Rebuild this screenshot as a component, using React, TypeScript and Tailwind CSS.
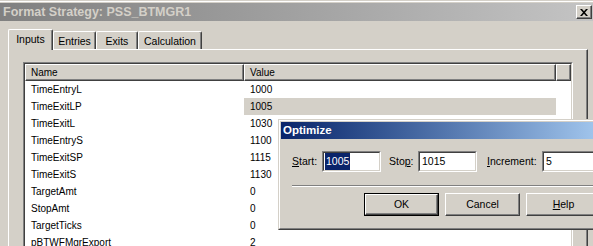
import React from "react";

const ROWS: [string, string][] = [
  ["TimeEntryL", "1000"],
  ["TimeExitLP", "1005"],
  ["TimeExitL", "1030"],
  ["TimeEntryS", "1100"],
  ["TimeExitSP", "1115"],
  ["TimeExitS", "1130"],
  ["TargetAmt", "0"],
  ["StopAmt", "0"],
  ["TargetTicks", "0"],
  ["pBTWFMgrExport", "2"],
];

const TABS = [
  { label: "Inputs", w: "w-[45px]", active: true },
  { label: "Entries", w: "w-[43px]", active: false },
  { label: "Exits", w: "w-[42px]", active: false },
  { label: "Calculation", w: "w-[64px]", active: false },
];

function Sunken({ className, children }: { className?: string; children?: React.ReactNode }) {
  return (
    <div className={`border border-t-[#808080] border-l-[#808080] border-r-white border-b-white ${className ?? ""}`}>
      <div className="h-full w-full border border-t-[#404040] border-l-[#404040] border-r-[#d4d0c8] border-b-[#d4d0c8] bg-white">
        {children}
      </div>
    </div>
  );
}

function Button({ children, def }: { children: React.ReactNode; def?: boolean }) {
  return (
    <div className={`h-[23px] w-[75px] bg-[#d4d0c8] ${def ? "border border-black" : ""}`}>
      <div className="flex h-full w-full items-center justify-center border border-t-white border-l-white border-r-[#404040] border-b-[#404040] shadow-[inset_-1px_-1px_0_#808080]">
        {children}
      </div>
    </div>
  );
}

export default function App() {
  return (
    <div className="relative h-[246px] w-[593px] overflow-hidden bg-[#d4d0c8] font-['Liberation_Sans',Arial,sans-serif] text-[10.5px] leading-none text-black">
      {/* window caption */}
      <div className="h-[1px]" />
      <div className="h-[1px] bg-white" />
      <div className="h-[1px]" />
      <div className="flex h-[18px] items-center justify-between bg-gradient-to-r from-[#808080] to-[#c4c4c4] pl-[3px] pr-[1px]">
        <span className="text-[12.5px] font-bold text-[#d4d0c8]">Format Strategy: PSS_BTMGR1</span>
        <div className="flex h-[14px] w-[16px] items-center justify-center border border-t-white border-l-white border-r-[#404040] border-b-[#404040] bg-[#d4d0c8] shadow-[inset_-1px_-1px_0_#808080]">
          <svg width="8" height="7" viewBox="0 0 8 7">
            <path d="M0 0h2l2 2.2L6 0h2L5 3.5 8 7H6L4 4.8 2 7H0l3-3.5z" fill="#000" />
          </svg>
        </div>
      </div>

      {/* tabs */}
      <div className="flex h-[28px] items-end pl-[8px]">
        {TABS.map((t) => (
          <div
            key={t.label}
            className={`${t.w} relative flex justify-center rounded-t-[2px] border-t border-l border-r border-t-white border-l-white border-r-[#404040] bg-[#d4d0c8] shadow-[inset_-1px_0_0_#808080] ${
              t.active ? "z-10 -mb-[1px] h-[21px] pt-[4px]" : "h-[18px] pt-[4px]"
            }`}
          >
            {t.label}
          </div>
        ))}
      </div>

      {/* tab page */}
      <div className="ml-[8px] h-[300px] w-[580px] border-t border-l border-r border-t-white border-l-white border-r-[#404040] pl-[14px] pt-[12px] shadow-[inset_-1px_0_0_#808080]">
        <Sunken className="h-[260px] w-[550px]">
          <div className="flex h-[17px] text-[10px]">
            <div className="flex w-[219px] items-center border border-t-white border-l-white border-r-[#404040] border-b-[#404040] bg-[#d4d0c8] pl-[5px] shadow-[inset_-1px_-1px_0_#808080]">
              Name
            </div>
            <div className="flex w-[312px] items-center border border-t-white border-l-white border-r-[#404040] border-b-[#404040] bg-[#d4d0c8] pl-[5px] shadow-[inset_-1px_-1px_0_#808080]">
              Value
            </div>
            <div className="flex-1 border border-t-white border-l-white border-r-[#404040] border-b-[#404040] bg-[#d4d0c8] shadow-[inset_-1px_-1px_0_#808080]" />
          </div>
          {ROWS.map(([name, value]) => (
            <div key={name} className="flex h-[17px] items-center text-[10px]">
              <div className="w-[219px] pl-[6px]">{name}</div>
              <div className={`flex h-full w-[312px] items-center pl-[6px] ${value === "1005" ? "bg-[#d4d0c8]" : ""}`}>
                {value}
              </div>
            </div>
          ))}
        </Sunken>
      </div>

      {/* Optimize dialog */}
      <div className="absolute left-[278px] top-[119px] z-20 h-[111px] w-[330px] border border-t-[#d4d0c8] border-l-[#d4d0c8] border-r-[#404040] border-b-[#404040] bg-[#d4d0c8]">
        <div className="h-full w-full border border-t-white border-l-white border-r-[#808080] border-b-[#808080] p-[1px]">
          <div className="flex h-[17px] items-center bg-gradient-to-r from-[#0a246a] to-[#a6caf0] pl-[2px] text-[11.5px] font-bold text-white">
            Optimize
          </div>
          <div className="pl-[11px] pt-[12px]">
            <div className="flex h-[21px] items-center">
              <span className="w-[30px]">
                <u>S</u>tart:
              </span>
              <Sunken className="h-[21px] w-[59px]">
                <div className="flex h-full items-center pl-[1px]">
                  <span className="bg-[#0a246a] px-[1px] py-[3px] text-white">1005</span>
                </div>
              </Sunken>
              <span className="ml-[8px] w-[29px]">
                Sto<u>p</u>:
              </span>
              <Sunken className="h-[21px] w-[59px]">
                <div className="flex h-full items-center pl-[2px]">1015</div>
              </Sunken>
              <span className="ml-[10px] w-[55px]">
                <u>I</u>ncrement:
              </span>
              <Sunken className="h-[21px] w-[59px]">
                <div className="flex h-full items-center pl-[2px]">5</div>
              </Sunken>
            </div>
            <div className="mt-[13px] h-[2px] border-t border-b border-t-[#808080] border-b-white" />
            <div className="mt-[6px] flex gap-[6px] pl-[72px]">
              <Button def>OK</Button>
              <Button>Cancel</Button>
              <Button>
                <span>
                  <u>H</u>elp
                </span>
              </Button>
            </div>
          </div>
        </div>
      </div>
    </div>
  );
}
